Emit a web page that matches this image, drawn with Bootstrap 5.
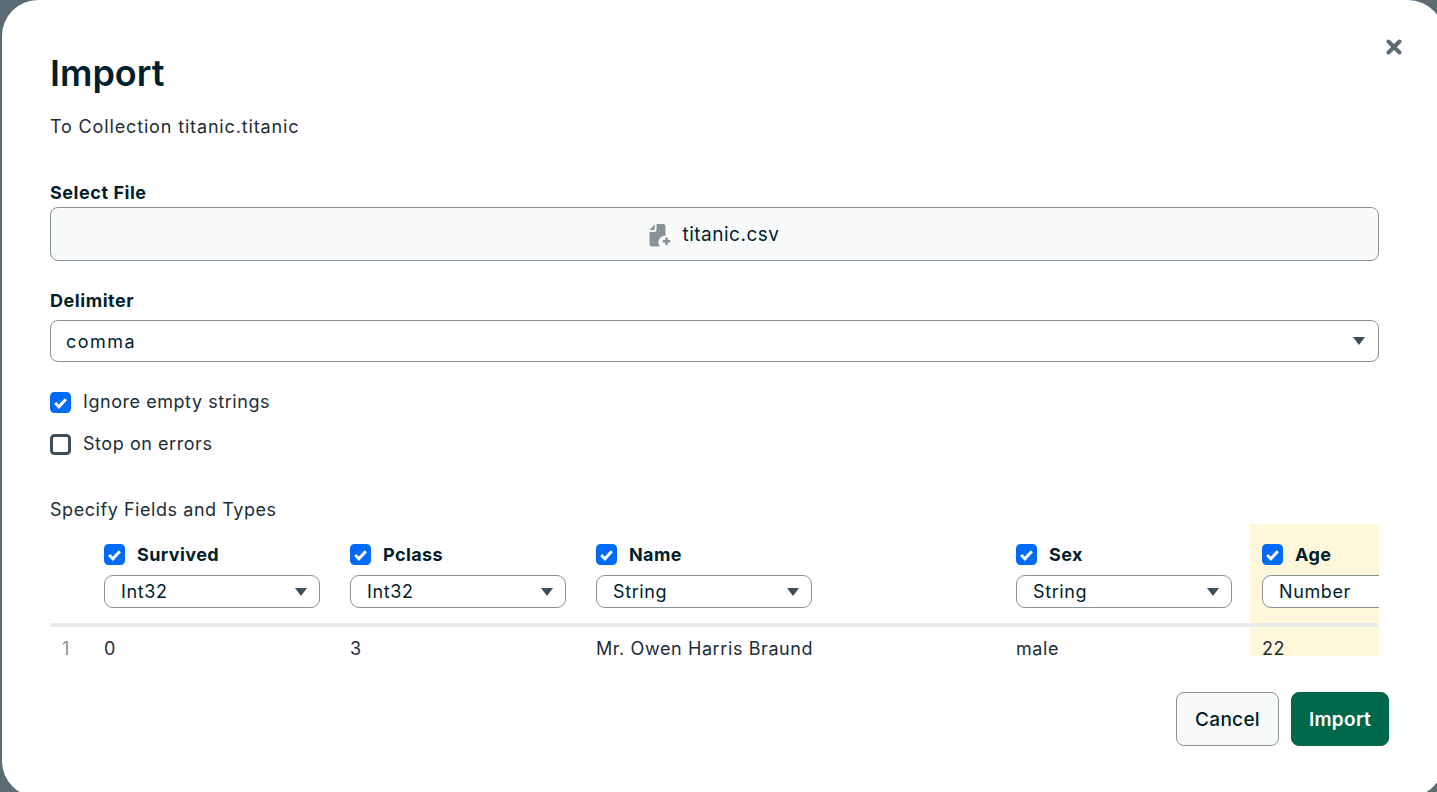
<!DOCTYPE html>
<html lang="en"><head><meta charset="utf-8"><title>Import</title>
<link href="https://cdn.jsdelivr.net/npm/bootstrap@5.3.0/dist/css/bootstrap.min.css" rel="stylesheet">
<style>
html,body{height:100%;overflow:hidden}
body{background:#5c6c75;font-family:"Inter","Liberation Sans",sans-serif;color:#001e2b;font-size:18px}
.imp-modal{width:1442px;height:797px;margin-left:2px;background:#fff;border-radius:36px;padding:48px 65px 0 48px;position:relative}
.imp-close{position:absolute;left:1384px;top:32px;width:16px;height:16px;padding:0;border:0;background:none;display:block}
.imp-title{font-size:36px;font-weight:600;line-height:50px;margin:0;color:#001e2b}
.imp-sub{font-size:18px;line-height:24px;margin:17px 0 0;letter-spacing:.85px;color:#1c2d38}
.imp-label{font-size:18px;font-weight:700;line-height:24px;display:block;margin:0 0 2px;letter-spacing:.55px}
.imp-label-wide{margin-bottom:7px}
.imp-file{height:54px;background:#f9fbfa;border:1px solid #889397;border-radius:8px;width:100%;font-size:19px;color:#001e2b;gap:10px;letter-spacing:.5px;padding:2px 0 0}
.imp-select{border:1px solid #889397;border-radius:8px;color:#001e2b;box-shadow:none;background-color:#fff;background-image:url("data:image/svg+xml,%3Csvg xmlns='http://www.w3.org/2000/svg' width='12' height='8'%3E%3Cpath d='M0 0h12L6 8z' fill='%233d4f58'/%3E%3C/svg%3E");background-size:12px 8px;background-position:right 13px center}
.imp-delim{height:42px;font-size:18px;padding:0 40px 0 15px;letter-spacing:1.5px}
.imp-type{height:33px;width:216px;font-size:18px;padding:0 30px 0 16px;border-radius:9px;background-position:right 12px center;letter-spacing:.6px}
.imp-check{width:21px;height:21px;margin:0;flex:none;border:3px solid #3d4f58;border-radius:5px;box-shadow:none!important}
.imp-check:checked{background-color:#016bf8;border-color:#016bf8;background-image:url("data:image/svg+xml,%3Csvg xmlns='http://www.w3.org/2000/svg' viewBox='0 0 16 16'%3E%3Cpath d='M3 8.500l3.500 3.500L13 5' fill='none' stroke='%23fff' stroke-width='2.800'/%3E%3C/svg%3E");background-size:17px;background-position:center}
.imp-opt{font-size:18px;line-height:24px;color:#1c2d38;margin:0;letter-spacing:.55px}
.imp-scroll{width:1329px;height:140px;overflow:hidden;margin-top:2px}
.imp-table{table-layout:fixed;width:1424px;border-collapse:collapse;margin:0}
.imp-table th,.imp-table td{padding:0 12px;vertical-align:top;font-size:18px;letter-spacing:.6px}
.imp-table th{height:101px;padding-top:20px;border-bottom:4px solid #e8edeb;font-weight:400}
.imp-table td{padding-top:14px;height:31px;line-height:15px;color:#1c2d38}
.imp-num{color:#889397!important}
.imp-name{font-weight:700;font-size:18px;line-height:21px;letter-spacing:.4px}
.imp-hl{background:#fef7db}
.imp-row{margin-bottom:10px}
.imp-btn{height:54px;font-size:19px;border-radius:8px;font-weight:500;padding:2px 0 0;letter-spacing:.3px}
.imp-cancel{width:103px;background:#f9fbfa;border:1px solid #889397;color:#001e2b}
.imp-go{width:98px;background:#00684a;border:1px solid #00684a;color:#fff;font-weight:600}
.imp-foot{margin:28px -10px 0 0;gap:12px}
.imp-spec{margin-top:42px}
.imp-gap-a{margin-top:42px}
.imp-gap-b{margin-top:28px}
.imp-gap-c{margin-top:28px}
.imp-opts{gap:18px}
</style></head><body>
<div class="imp-modal">
<button class="imp-close" aria-label="Close"><svg width="16" height="16" viewBox="0 0 16 16"><path d="M2.500 2.500l11 11M13.500 2.500l-11 11" stroke="#5c6c75" stroke-width="4" stroke-linecap="round"/></svg></button>
<h1 class="imp-title">Import</h1>
<p class="imp-sub">To Collection titanic.titanic</p>
<div class="imp-gap-a">
<label class="imp-label">Select File</label>
<button class="imp-file d-flex align-items-center justify-content-center"><svg width="23" height="25" viewBox="0 0 23 25"><path d="M7.500 1H14a2.500 2.500 0 0 1 2.500 2.500v9.300A6.500 6.500 0 0 0 11 23.500H3A2.500 2.500 0 0 1 .5 21V9H5a2.500 2.500 0 0 0 2.500-2.500zM.7 7 5.700 1.200V6a1 1 0 0 1-1 1z" fill="#889397"/><path d="M17.500 14.500v7.500M13.700 18.200h7.600" stroke="#889397" stroke-width="2.600"/></svg><span>titanic.csv</span></button>
</div>
<div class="imp-gap-b">
<label class="imp-label imp-label-wide">Delimiter</label>
<select class="form-select imp-select imp-delim"><option>comma</option></select>
</div>
<div class="d-flex flex-column imp-opts imp-gap-c">
<div class="d-flex align-items-center gap-2"><input class="form-check-input imp-check me-1" type="checkbox" checked><label class="imp-opt">Ignore empty strings</label></div>
<div class="d-flex align-items-center gap-2"><input class="form-check-input imp-check me-1" type="checkbox"><label class="imp-opt">Stop on errors</label></div>
</div>
<div class="imp-opt imp-spec">Specify Fields and Types</div>
<div class="imp-scroll">
<table class="imp-table"><colgroup><col style="width:42px"><col style="width:246px"><col style="width:246px"><col style="width:420px"><col style="width:246px"><col style="width:224px"></colgroup>
<thead><tr><th></th>
<th><div class="d-flex align-items-center gap-2 imp-row"><input class="form-check-input imp-check me-1" type="checkbox" checked><span class="imp-name">Survived</span></div><select class="form-select imp-select imp-type"><option>Int32</option></select></th>
<th><div class="d-flex align-items-center gap-2 imp-row"><input class="form-check-input imp-check me-1" type="checkbox" checked><span class="imp-name">Pclass</span></div><select class="form-select imp-select imp-type"><option>Int32</option></select></th>
<th><div class="d-flex align-items-center gap-2 imp-row"><input class="form-check-input imp-check me-1" type="checkbox" checked><span class="imp-name">Name</span></div><select class="form-select imp-select imp-type"><option>String</option></select></th>
<th><div class="d-flex align-items-center gap-2 imp-row"><input class="form-check-input imp-check me-1" type="checkbox" checked><span class="imp-name">Sex</span></div><select class="form-select imp-select imp-type"><option>String</option></select></th>
<th class="imp-hl"><div class="d-flex align-items-center gap-2 imp-row"><input class="form-check-input imp-check me-1" type="checkbox" checked><span class="imp-name">Age</span></div><select class="form-select imp-select imp-type"><option>Number</option></select></th>
</tr></thead>
<tbody><tr><td class="imp-num">1</td><td>0</td><td>3</td><td>Mr. Owen Harris Braund</td><td>male</td><td class="imp-hl">22</td></tr></tbody></table>
</div>
<div class="imp-foot d-flex justify-content-end"><button class="btn imp-btn imp-cancel">Cancel</button><button class="btn imp-btn imp-go">Import</button></div>
</div>
</body></html>
